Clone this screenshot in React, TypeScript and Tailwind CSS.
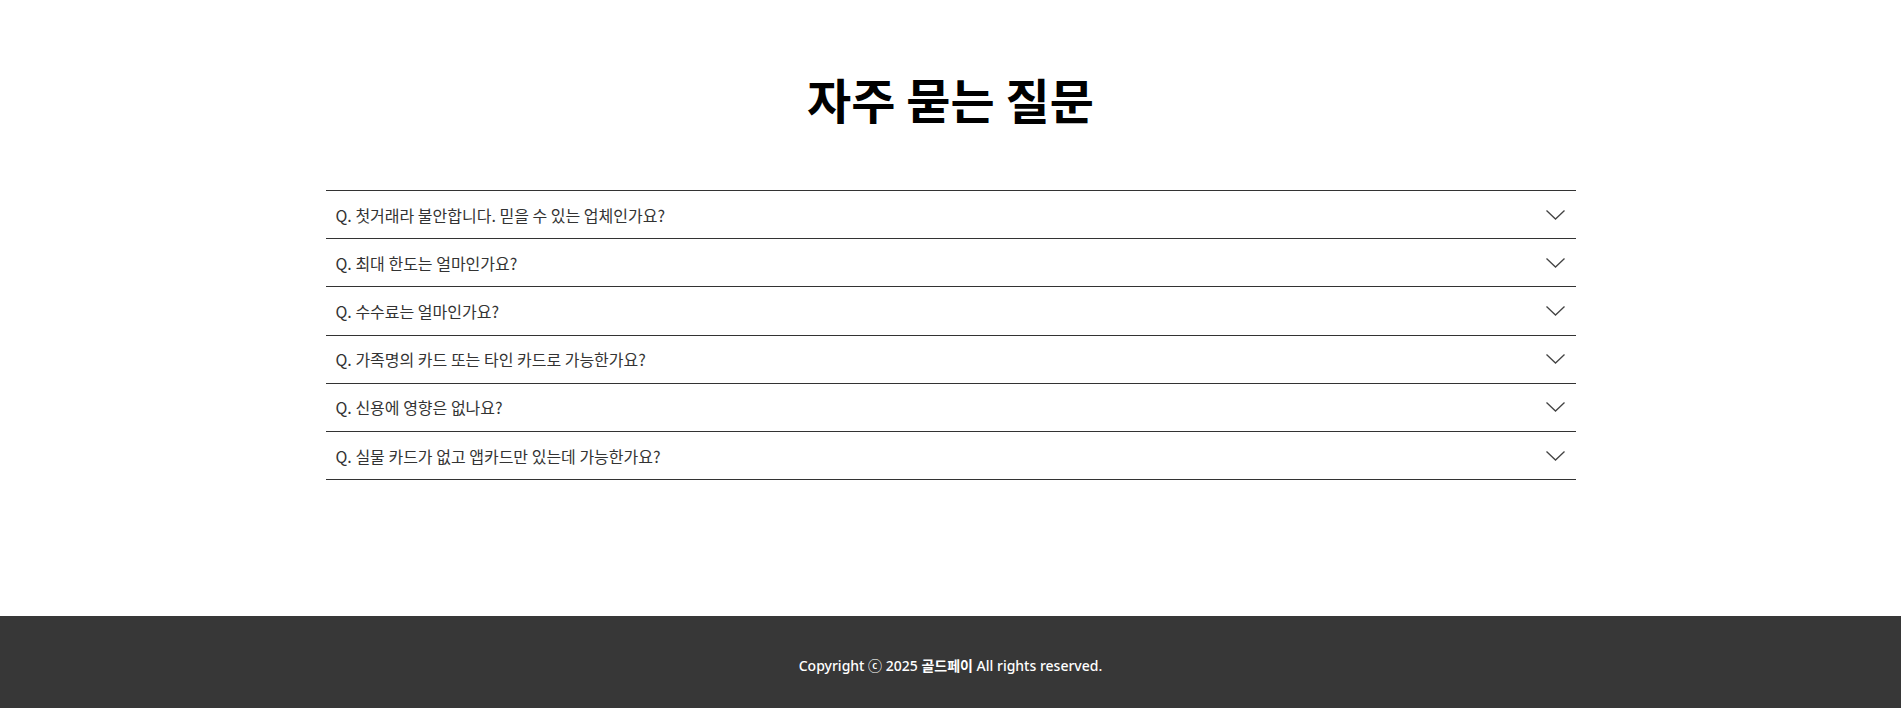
const faqs = [
  "Q. 첫거래라 불안합니다. 믿을 수 있는 업체인가요?",
  "Q. 최대 한도는 얼마인가요?",
  "Q. 수수료는 얼마인가요?",
  "Q. 가족명의 카드 또는 타인 카드로 가능한가요?",
  "Q. 신용에 영향은 없나요?",
  "Q. 실물 카드가 없고 앱카드만 있는데 가능한가요?"
];

function Chevron() {
  return (
    <svg width="19" height="10" viewBox="0 0 19 10" fill="none" className="shrink-0">
      <polyline points="0.5,0.5 9.5,9 18.5,0.5" stroke="#444" strokeWidth="1.3" />
    </svg>
  );
}

export default function App() {
  return (
    <div className="min-h-screen bg-white font-['Noto_Sans_CJK_KR','Noto_Sans',sans-serif]">
      <section className="pt-[67px] pb-[136px]">
        <h2 className="mb-[61px] text-center text-[48px] font-bold leading-[62px] text-black">자주 묻는 질문</h2>

        <div className="mx-auto w-[1250px] border-t border-[#333]">
          {faqs.map((q) => (
            <div key={q} className="flex h-[48.2px] items-center justify-between border-b border-[#333] pr-[11px] pl-[10px]">
              <span className="text-[16px] text-[#333]">{q}</span>
              <Chevron />
            </div>
          ))}
        </div>
      </section>

      <footer className="flex h-[93px] items-center justify-center bg-[#373737] pt-[6px]">
        <p className="font-['Noto_Sans','Noto_Sans_CJK_KR',sans-serif] text-[14px] font-medium text-white">
          Copyright ⓒ 2025 <span className="font-['Noto_Sans_CJK_KR',sans-serif] font-bold">골드페이</span> All rights reserved.
        </p>
      </footer>
    </div>
  );
}
